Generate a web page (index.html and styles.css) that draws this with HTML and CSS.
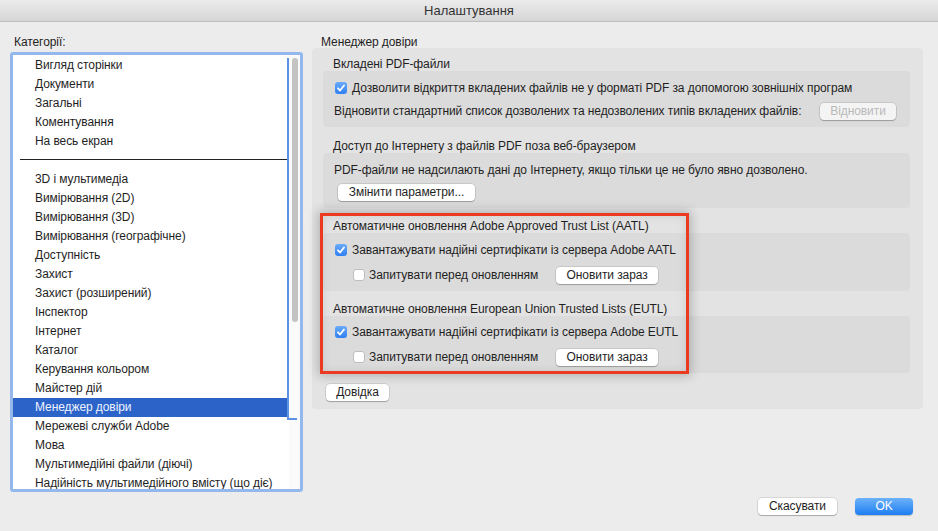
FILE: index.html
```html
<!DOCTYPE html>
<html lang="uk">
<head>
	<meta charset="UTF-8">
	<title>Налаштування</title>
	<link rel="stylesheet" href="styles.css">
</head>
<body>
	<div class="window">
		<div class="titlebar">Налаштування</div>
		<div class="content">
			<div class="side">
				<div class="side-label">Категорії:</div>
				<div class="list">
					<ul class="items">
						<li>Вигляд сторінки</li>
						<li>Документи</li>
						<li>Загальні</li>
						<li>Коментування</li>
						<li>На весь екран</li>
						<li class="sep"></li>
						<li>3D і мультимедіа</li>
						<li>Вимірювання (2D)</li>
						<li>Вимірювання (3D)</li>
						<li>Вимірювання (географічне)</li>
						<li>Доступність</li>
						<li>Захист</li>
						<li>Захист (розширений)</li>
						<li>Інспектор</li>
						<li>Інтернет</li>
						<li>Каталог</li>
						<li>Керування кольором</li>
						<li>Майстер дій</li>
						<li class="on">Менеджер довіри</li>
						<li>Мережеві служби Adobe</li>
						<li>Мова</li>
						<li>Мультимедійні файли (діючі)</li>
						<li>Надійність мультимедійного вмісту (що діє)</li>
					</ul>
					<div class="track"><div class="thumb"></div></div>
					<div class="focus-line"></div>
				</div>
			</div>

			<div class="main">
				<div class="main-label">Менеджер довіри</div>
				<div class="panel">
					<div class="group first">
						<div class="group-title">Вкладені PDF-файли</div>
						<div class="group-box">
							<div class="row"><span class="check on"><svg viewBox="0 0 12 12"><path d="M3 6.3l2 2.2 4-5" /></svg></span>Дозволити відкриття вкладених файлів не у форматі PDF за допомогою зовнішніх програм</div>
							<div class="row split"><span>Відновити стандартний список дозволених та недозволених типів вкладених файлів:</span><button class="btn off w-restore">Відновити</button></div>
						</div>
					</div>

					<div class="group second">
						<div class="group-title">Доступ до Інтернету з файлів PDF поза веб-браузером</div>
						<div class="group-box tight">
							<div class="row">PDF-файли не надсилають дані до Інтернету, якщо тільки це не було явно дозволено.</div>
							<div class="row"><button class="btn w-change">Змінити параметри...</button></div>
						</div>
					</div>

					<div class="group">
						<div class="group-title">Автоматичне оновлення Adobe Approved Trust List (AATL)</div>
						<div class="group-box wide">
							<div class="row"><span class="check on"><svg viewBox="0 0 12 12"><path d="M3 6.3l2 2.2 4-5" /></svg></span>Завантажувати надійні сертифікати із сервера Adobe AATL</div>
							<div class="row sub"><span class="check"></span>Запитувати перед оновленням<button class="btn w-update">Оновити зараз</button></div>
						</div>
					</div>

					<div class="group">
						<div class="group-title">Автоматичне оновлення European Union Trusted Lists (EUTL)</div>
						<div class="group-box wide last">
							<div class="row"><span class="check on"><svg viewBox="0 0 12 12"><path d="M3 6.3l2 2.2 4-5" /></svg></span>Завантажувати надійні сертифікати із сервера Adobe EUTL</div>
							<div class="row sub"><span class="check"></span>Запитувати перед оновленням<button class="btn w-update">Оновити зараз</button></div>
						</div>
					</div>

					<button class="btn w-help">Довідка</button>
					<div class="callout"></div>
				</div>
			</div>
		</div>
		<div class="footer">
			<button class="btn w-cancel">Скасувати</button>
			<button class="btn ok">OK</button>
		</div>
	</div>
</body>
</html>
```

FILE: styles.css
```css
html *{
	padding:0;
	margin:0;
	box-sizing:border-box;
}
body{
	font-family:"Liberation Sans", Arial, sans-serif;
	font-size:12px;
	letter-spacing:-0.08px;
	color:#1f1f1f;
	background:#ececec;
}
.window{
	width:938px;
	height:531px;
	display:flex;
	flex-direction:column;
	background:#ececec;
	overflow:hidden;
}
.titlebar{
	height:22px;
	line-height:21px;
	font-size:13px;
	letter-spacing:0;
	text-align:center;
	color:#333;
	background:linear-gradient(#ebebeb, #d6d6d6);
	border-bottom:1px solid #bdbdbd;
}
.content{
	display:flex;
	gap:9px;
	padding:12px 15px 0 10px;
}

/* left column */
.side{
	width:293px;
}
.side-label{
	height:16px;
	line-height:16px;
	padding-left:4px;
	margin-bottom:2px;
}
.list{
	position:relative;
	display:flex;
	height:440px;
	border:3px solid #94b8ec;
	border-radius:3px;
	background:#fff;
	overflow:hidden;
}
.items{
	list-style:none;
	width:276px;
	padding-top:1px;
}
.items li{
	height:19px;
	line-height:19px;
	padding-left:22px;
	white-space:nowrap;
}
.items li.on{
	background:#2b63c9;
	color:#eef3ff;
}
.items li.sep{
	position:relative;
}
.items li.sep::after{
	content:"";
	position:absolute;
	left:7px;
	right:2px;
	top:8px;
	border-top:1px solid #222;
}
.track{
	flex:1;
	background:#fafafa;
	padding:3px 0 0 3px;
}
.thumb{
	width:6px;
	height:264px;
	border-radius:3px;
	background:#c3c3c3;
}
.focus-line{
	position:absolute;
	left:274px;
	top:3px;
	width:2px;
	height:362px;
	background:#5b92e6;
}
.focus-line::after{
	content:"";
	position:absolute;
	left:0;
	bottom:0;
	width:10px;
	height:2px;
	background:#5b92e6;
}

/* right column */
.main{
	width:611px;
}
.main-label{
	height:14px;
	line-height:16px;
	padding-left:9px;
}
.panel{
	position:relative;
	height:361px;
	background:#e3e3e3;
	border-radius:4px;
	padding:8px 13px 9px 11px;
}
.group{
	margin-top:10px;
}
.group.first{
	margin-top:0;
}
.group.second{
	margin-top:11px;
}
.group-title{
	height:15px;
	line-height:16px;
	padding-left:10px;
}
.group-box{
	background:#dbdbdb;
	border-radius:4px;
	padding:8px 14px 7px 11px;
	display:flex;
	flex-direction:column;
	gap:5px;
}
.group-box.tight{
	gap:4px;
}
.group-box.wide{
	gap:7px;
}
.group-box.last{
	padding-top:7px;
}
.row{
	height:18px;
	display:flex;
	align-items:center;
	white-space:nowrap;
}
.row.split{
	justify-content:space-between;
}
.row.sub{
	padding-left:18px;
}
.row.sub .btn{
	margin-left:18px;
}
.check{
	width:12px;
	height:12px;
	margin:0 5px 0 1px;
	border-radius:3px;
	background:#fff;
	border:1px solid #bdbdbd;
	display:inline-block;
	flex:none;
}
.check.on{
	border:0;
	background:linear-gradient(#6aabf9, #2f7ff2);
}
.check svg{
	display:block;
	width:12px;
	height:12px;
}
.check path{
	fill:none;
	stroke:#fff;
	stroke-width:1.8;
	stroke-linecap:round;
	stroke-linejoin:round;
}
.row.sub .check{
	margin-right:4px;
}

.btn{
	font-family:inherit;
	font-size:12px;
	letter-spacing:inherit;
	color:#1f1f1f;
	height:17px;
	line-height:17px;
	border:0;
	border-radius:4px;
	background:#fff;
	box-shadow:0 0 0 0.5px rgba(0,0,0,0.18), 0 1px 1px rgba(0,0,0,0.22);
	text-align:center;
	flex:none;
}
.btn.off{
	color:#b9b9b9;
	background:#f4f4f4;
}
.w-restore{ width:76px; }
.w-change{ width:137px; margin-left:4px; }
.w-update{ width:102px; }
.w-help{ width:63px; margin-top:11px; margin-left:3px; }
.w-cancel{ width:79px; }
.btn.ok{
	width:58px;
	color:#fff;
	background:linear-gradient(#6cb2fa, #1e7ef0);
	box-shadow:0 1px 1px rgba(0,0,0,0.2);
}

/* red annotation frame over the trust list groups */
.callout{
	position:absolute;
	left:8px;
	top:165px;
	width:369px;
	height:161px;
	border:3px solid #ea3a1f;
	box-shadow:0 0 10px 2px rgba(0,0,0,0.22), inset 0 0 9px rgba(0,0,0,0.1);
}

.footer{
	margin-top:auto;
	display:flex;
	justify-content:flex-end;
	gap:18px;
	padding:0 25px 16px 0;
}
```
